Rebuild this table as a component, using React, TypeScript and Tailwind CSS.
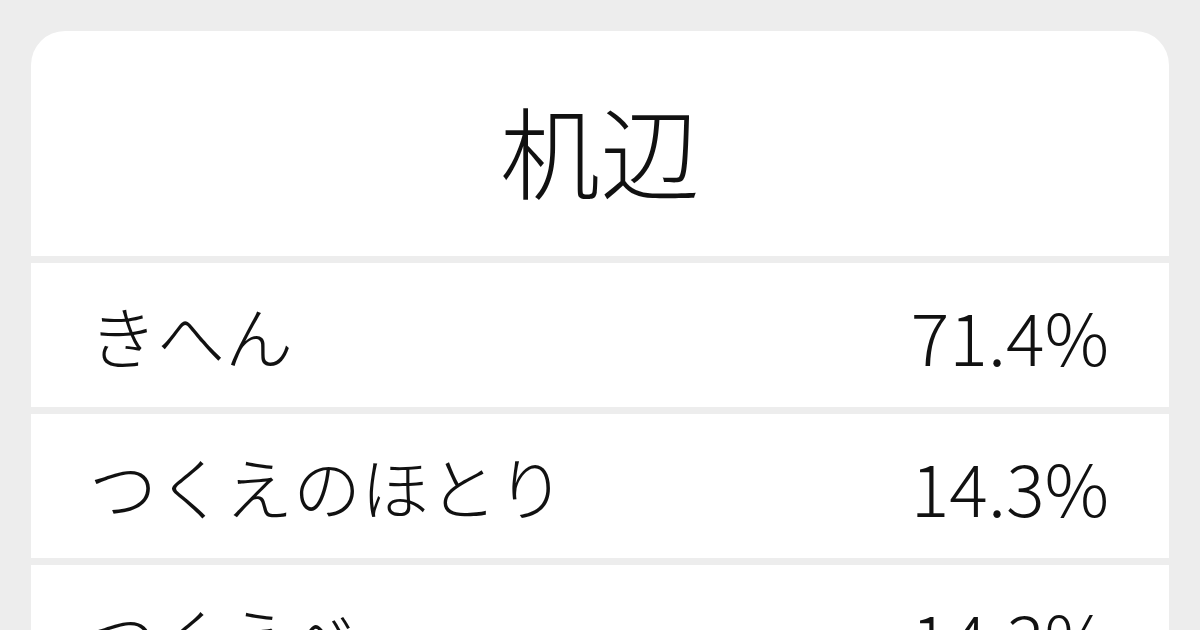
const rows = [
  { name: 'きへん', pct: '71.4%' },
  { name: 'つくえのほとり', pct: '14.3%' },
  { name: 'つくえべ', pct: '14.3%' },
];

export default function App() {
  return (
    <div className="min-h-screen h-[630px] overflow-hidden bg-[#ededed] px-[31px] pt-[31px] font-['Noto_Sans_CJK_JP',sans-serif] font-light text-[#111]">
      <div className="flex flex-col gap-[7px] overflow-hidden rounded-t-[34px]">
        <div className="flex h-[225px] items-center justify-center bg-white pt-[10px] text-[100px] leading-none">
          机辺
        </div>
        {rows.map((r) => (
          <div
            key={r.name}
            className="flex h-[144px] items-center justify-between bg-white pl-[58px] pr-[60px] leading-none"
          >
            <span className="text-[68px]">{r.name}</span>
            <span className="text-[72px]">{r.pct}</span>
          </div>
        ))}
      </div>
    </div>
  );
}
